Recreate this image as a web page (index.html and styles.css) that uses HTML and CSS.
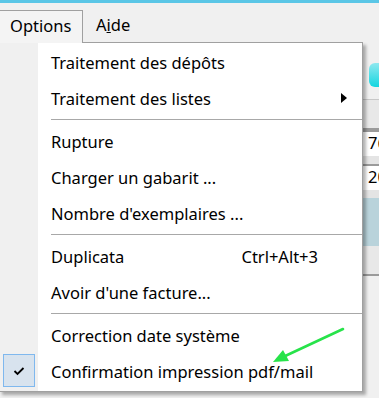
FILE: index.html
```html
<!DOCTYPE html>
<html lang="fr">
<head>
    <meta charset="UTF-8">
    <meta name="viewport" content="width=device-width, initial-scale=1.0">
    <title>Options</title>
    <link rel="stylesheet" href="styles.css">
</head>
<body>
    <div class="window">
        <div class="titlebar"></div>
        <div class="menubar">
            <span class="menubar-item open">Options</span>
            <span class="menubar-item">A<u>i</u>de</span>
        </div>

        <!-- the form behind the menu, only its right edge shows -->
        <div class="workspace">
            <div class="toolbar">
                <span class="tool-icon"></span>
            </div>
            <div class="band"></div>
            <div class="field">76</div>
            <div class="field">20</div>
            <div class="panel"></div>
            <div class="band"></div>
        </div>

        <div class="dropdown">
            <div class="item">Traitement des dépôts</div>
            <div class="item has-sub">Traitement des listes<span class="sub-arrow"></span></div>
            <div class="separator"></div>
            <div class="item">Rupture</div>
            <div class="item">Charger un gabarit ...</div>
            <div class="item">Nombre d'exemplaires ...</div>
            <div class="separator"></div>
            <div class="item">Duplicata<span class="shortcut">Ctrl+Alt+3</span></div>
            <div class="item">Avoir d'une facture...</div>
            <div class="separator"></div>
            <div class="item">Correction date système</div>
            <div class="item checked">
                <span class="check">
                    <svg width="12" height="10" viewBox="0 0 12 10"><polyline points="1.5,5 4.5,8 10.5,2" fill="none" stroke="#000" stroke-width="1.8"/></svg>
                </span>
                Confirmation impression pdf/mail
            </div>
        </div>

        <svg class="annotation" width="379" height="398" viewBox="0 0 379 398">
            <line x1="343" y1="329" x2="283" y2="357" stroke="#27e34a" stroke-width="2.6" stroke-linecap="round"/>
            <polygon points="273,362 283,350 289,361" fill="#27e34a"/>
        </svg>
    </div>
</body>
</html>
```

FILE: styles.css
```css
body {
    margin: 0;
    font-family: "Noto Sans", "Open Sans", sans-serif;
    font-size: 16.5px;
    color: #000;
    background: #f0f0f0;
}
.window {
    position: relative;
    width: 379px;
    height: 398px;
    overflow: hidden;
    background: #f0f0f0;
}
.titlebar {
    height: 3px;
    background: #5ac6e6;
}
.menubar {
    display: flex;
    height: 39px;
    align-items: flex-end;
    background: #f0f0f0;
}
.menubar-item {
    height: 32px;
    line-height: 29px;
    padding: 0 10px;
    box-sizing: border-box;
    white-space: nowrap;
}
.menubar-item.open {
    position: relative;
    z-index: 3;
    width: 84px;
    height: 33px;
    margin-bottom: -1px;
    margin-left: -1px;
    padding-left: 10px;
    border: 1px solid #a0a0a0;
    border-bottom: none;
    background: #f4f4f4;
}
.menubar-item:last-child {
    padding-left: 13px;
}

.workspace {
    margin-left: 363px;
    display: flex;
    flex-direction: column;
}
.toolbar {
    height: 58px;
    padding: 21px 0 0 6px;
    box-sizing: border-box;
    border-bottom: 1px solid #c8c8c8;
}
.tool-icon {
    display: block;
    width: 14px;
    height: 24px;
    border-radius: 6px 0 0 6px;
    background: linear-gradient(#8fe8ef, #14d6e0);
}
.band {
    height: 28px;
    border-bottom: 2px solid #9a9a9a;
    background: #e8e8e8;
}
.field {
    height: 24px;
    padding-left: 5px;
    line-height: 22px;
    border-bottom: 8px solid #e4e4e4;
    border-top: 2px solid #9a9a9a;
    background: #fff;
    white-space: nowrap;
}
.panel {
    height: 48px;
    background: #b9d3db;
}

.dropdown {
    position: absolute;
    z-index: 2;
    left: -1px;
    top: 42px;
    width: 364px;
    padding: 1px 0 2px;
    box-sizing: border-box;
    border: 1px solid #a0a0a0;
    border-top-color: transparent;
    background: linear-gradient(to right, #f0f0f0 38px, #fff 38px);
    box-shadow: 3px 3px 3px rgba(0, 0, 0, 0.3);
}
.dropdown::before {
    content: "";
    position: absolute;
    left: 83px;
    right: -1px;
    top: -1px;
    border-top: 1px solid #a0a0a0;
}
.item {
    position: relative;
    display: flex;
    align-items: center;
    height: 36px;
    padding: 0 44px 0 51px;
    white-space: nowrap;
}
.shortcut {
    margin-left: auto;
}
.sub-arrow {
    position: absolute;
    right: 15px;
    top: 13px;
    border-left: 6px solid #000;
    border-top: 5px solid transparent;
    border-bottom: 5px solid transparent;
}
.separator {
    height: 7px;
    margin-left: 51px;
    background: linear-gradient(#fff 3px, #a8a8a8 3px, #a8a8a8 4px, #fff 4px);
}
.check {
    position: absolute;
    left: 3px;
    top: 1px;
    width: 32px;
    height: 33px;
    box-sizing: border-box;
    display: flex;
    align-items: center;
    justify-content: center;
    border: 1px solid #7fb8ee;
    background: #d8e3ee;
}
.annotation {
    position: absolute;
    z-index: 4;
    left: 0;
    top: 0;
    pointer-events: none;
}
```
